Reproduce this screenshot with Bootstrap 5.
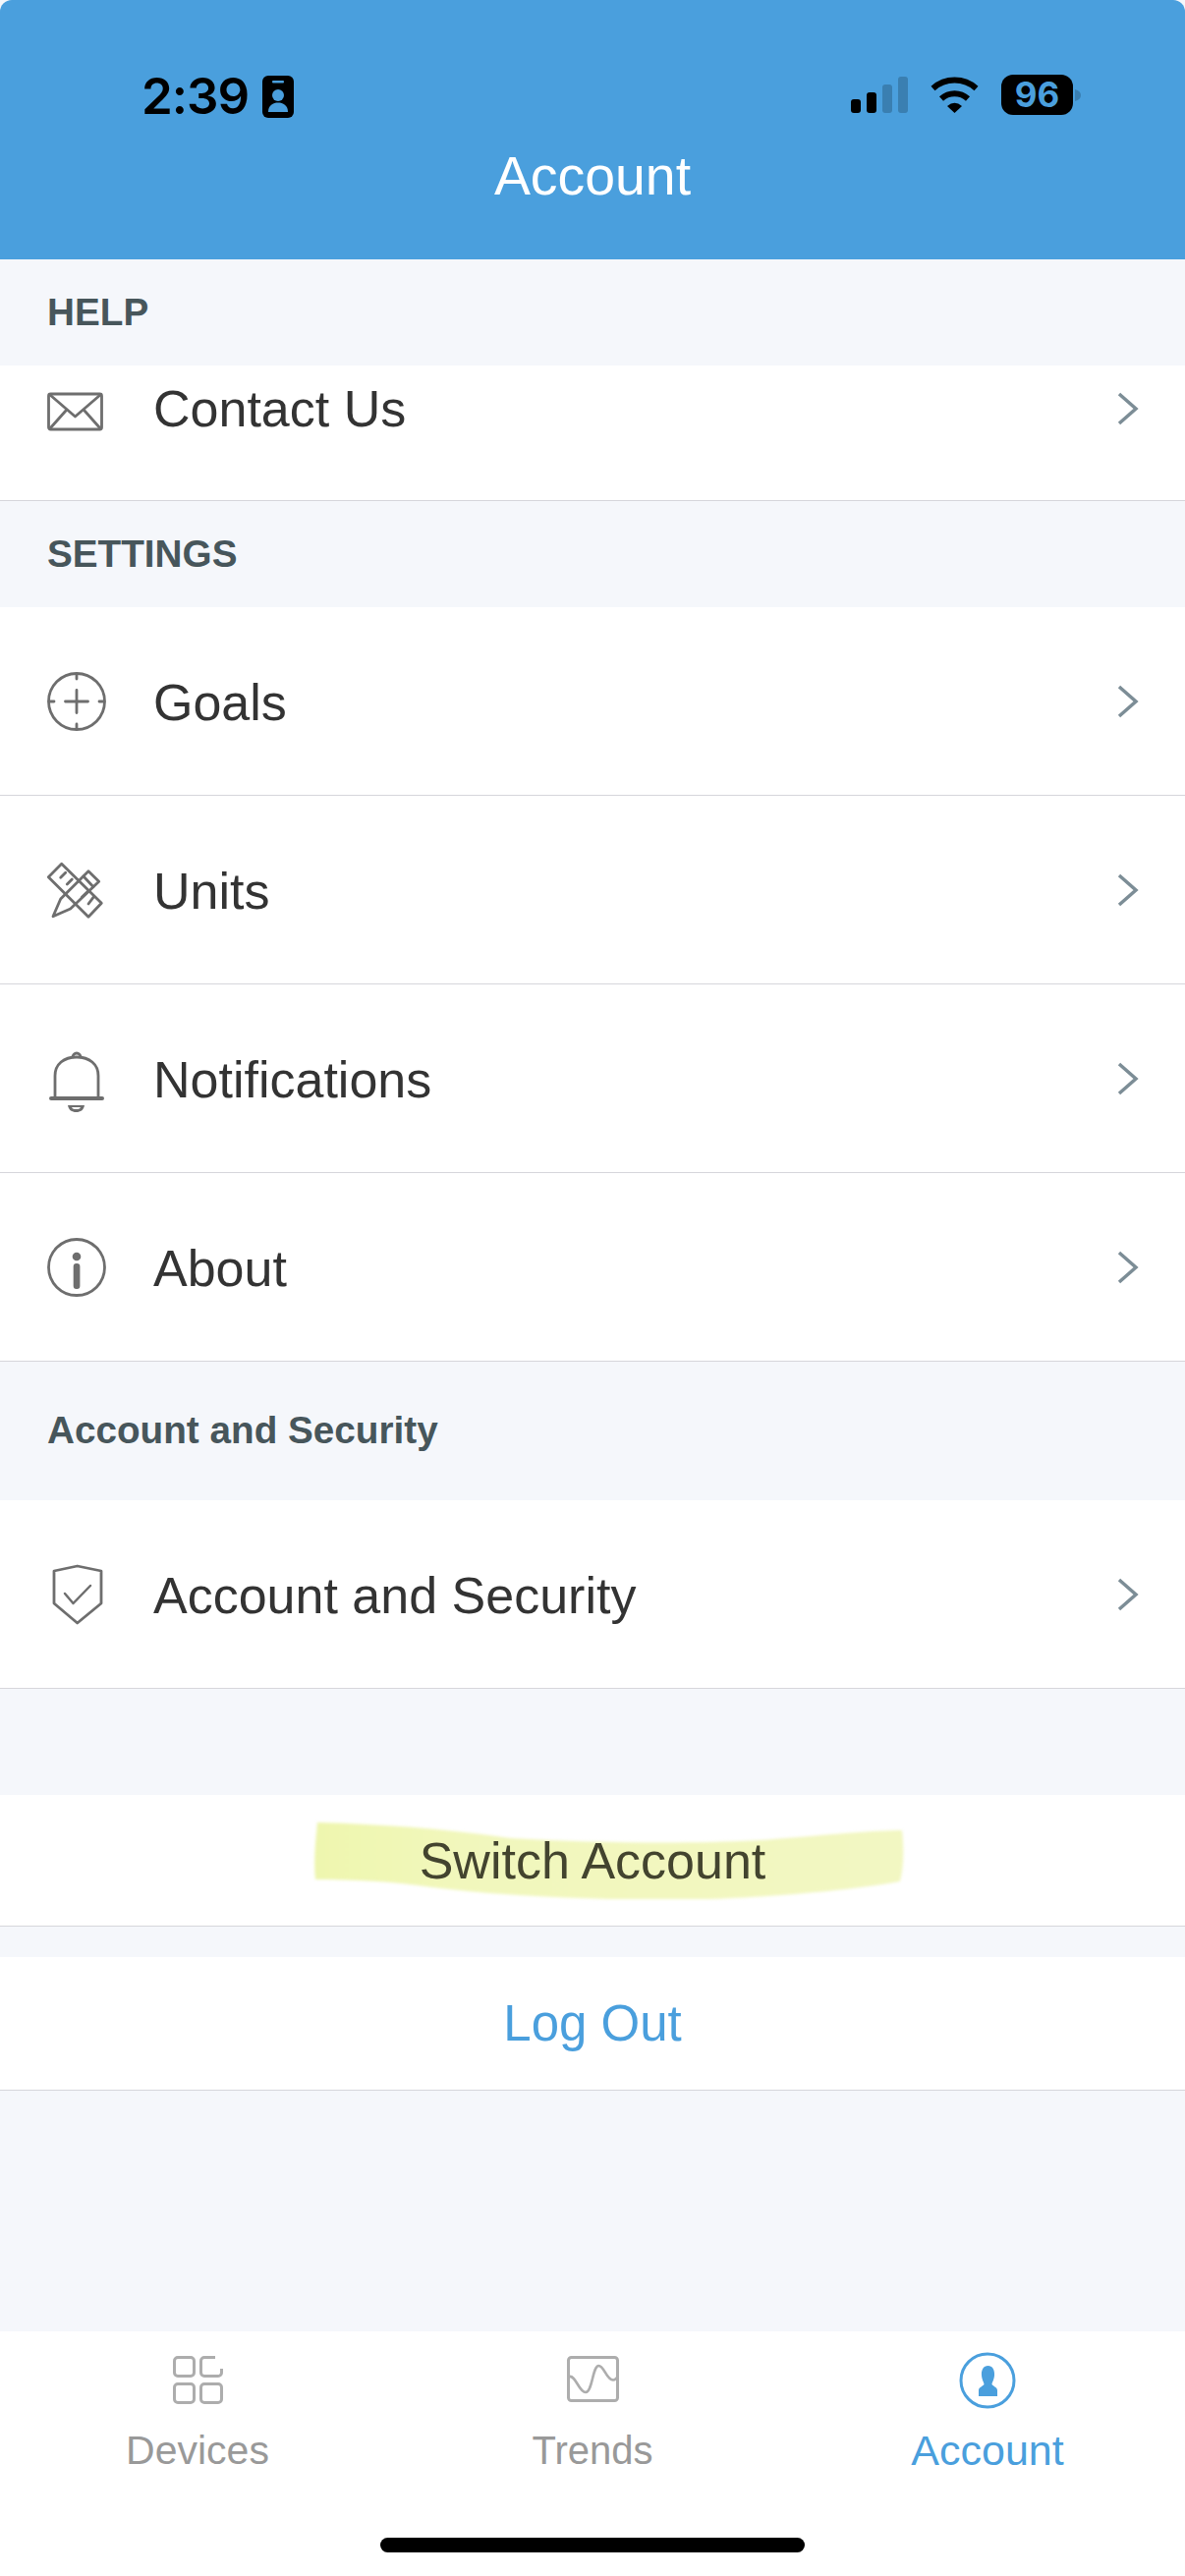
<!DOCTYPE html>
<html lang="en">
<head>
<meta charset="utf-8">
<title>Account</title>
<link href="https://cdn.jsdelivr.net/npm/bootstrap@5.3.0/dist/css/bootstrap.min.css" rel="stylesheet">
<style>
html,body{margin:0;height:2622px;overflow:hidden;background:#fff}
body{font-family:"Liberation Sans",Arial,sans-serif;color:#333}
.app-screen{height:2622px;background:#f5f7fb}
.app-head{background:#4a9fdd;height:264px;border-radius:12px 12px 0 0;flex:none}
.app-status{height:147px;padding:76px 106px 0 144px}
.app-time{font-family:Inter,"Liberation Sans",sans-serif;font-weight:600;font-size:51px;line-height:44px;color:#000;letter-spacing:-1px}
.app-gap-id{gap:14px}
.app-gap-sig{gap:22px}
.app-title{font-size:55.4px;line-height:64px;color:#fff;text-align:center;font-weight:400}
.app-batt{width:73px;height:41px;background:#000;border-radius:12px;color:#4a9fdd;font-family:Inter,"Liberation Sans",sans-serif;font-weight:700;font-size:35px;line-height:41px;text-align:center}
.app-nub{margin-left:-20px}
.app-sec{height:108px;padding:0 48px;font-weight:700;font-size:38.7px;color:#47565b;line-height:1;flex:none}
.app-sec-tall{height:141px}
.app-rows{--bs-border-color:#d6d6db;--bs-border-width:1px;--bs-list-group-border-color:#d6d6db;--bs-list-group-border-width:1px;--bs-list-group-item-padding-x:48px;--bs-list-group-item-padding-y:0;--bs-list-group-bg:#fff;--bs-list-group-color:#333;--bs-list-group-border-radius:0;flex:none}
.app-row{height:192px;font-size:52px;line-height:60px;gap:48px}
.app-row>span{padding-top:2px}
.app-row.app-clip{height:138px;padding-bottom:50px}
.app-row.app-clip>span{padding-top:0}
.app-row svg.app-ico{width:60px;height:60px;flex:none;overflow:visible}
.app-chev{width:24px;height:34px;margin-right:-2px;flex:none}
.app-gap{height:108px;flex:none}
.app-btn{height:134px;font-size:52px;line-height:60px;background:#fff;border-bottom:1px solid #d6d6db;flex:none}
.app-btn.app-switch{color:#43442f}
.app-btn.app-log{height:136px;font-size:51px;color:#4a9fdd;margin-top:31px}
.app-mark{left:320px;top:28px;width:600px;height:78px;filter:blur(1.5px)}
.app-mark-text{z-index:1}
.app-tabs{height:249px;background:#fff;flex:none;margin:0;--bs-gutter-x:0}
.app-tab{font-size:41px;line-height:48px;color:#999;padding-top:18px}
.app-tab-sm{font-size:40px}
.app-tab.app-on{color:#4a9fdd;font-size:43px}
.app-tab svg{height:62px;width:62px;display:block;margin:0 auto 17px}
.app-home{left:387px;top:210px;width:432px;height:15px;background:#000;border-radius:8px}
.app-ico-s{fill:none;stroke:#6e6e6e;stroke-width:2.800;stroke-linejoin:round;stroke-linecap:round}
</style>
</head>
<body>
<div class="app-screen d-flex flex-column">
  <header class="app-head d-flex flex-column">
    <div class="app-status d-flex justify-content-between align-items-start">
      <div class="d-flex align-items-center app-gap-id">
        <span class="app-time">2:39</span>
        <svg width="32" height="43" viewBox="0 0 32 43"><rect width="32" height="43" rx="6" fill="#000"/><rect x="10" y="5" width="12" height="2.500" rx="1" fill="#4a9fdd"/><circle cx="16" cy="20" r="6" fill="#4a9fdd"/><path d="M6 37c0-7 5-9.500 10-9.500s10 2.500 10 9.500z" fill="#4a9fdd"/></svg>
      </div>
      <div class="d-flex align-items-center app-gap-sig">
        <svg width="58" height="37" viewBox="0 0 58 37"><rect y="23" width="10" height="14" rx="3" fill="#000"/><rect x="16" y="16" width="10" height="21" rx="3" fill="#000"/><rect x="32" y="8" width="10" height="29" rx="3" fill="#3a7fb1"/><rect x="48" width="10" height="37" rx="3" fill="#3a7fb1"/></svg>
        <svg width="51" height="37" viewBox="0 0 51 37" fill="none" stroke="#000" stroke-width="6"><path d="M3.500 12A33 33 0 0 1 47.500 12"/><path d="M12 22.500A20 20 0 0 1 39 22.500"/><path d="M18 30Q25.500 23.500 33 30L25.500 37Z" fill="#000" stroke="none"/></svg>
        <div class="app-batt">96</div>
        <svg class="app-nub" width="6" height="12" viewBox="0 0 6 12"><path d="M0 0c4 1 6 3 6 6s-2 5-6 6z" fill="#3a7fb1"/></svg>
      </div>
    </div>
    <div class="app-title">Account</div>
  </header>

  <div class="app-sec d-flex align-items-center">HELP</div>
  <div class="list-group list-group-flush app-rows">
    <div class="list-group-item app-row app-clip d-flex align-items-center border-bottom">
      <svg class="app-ico" viewBox="0 0 60 60"><g class="app-ico-s"><rect x="1.500" y="15" width="54" height="36" rx="2"/><path d="M3 16 28.500 38 54 16M3 50 19 32M54 50 38 32"/></g></svg>
      <span class="flex-grow-1">Contact Us</span>
      <svg class="app-chev" viewBox="0 0 24 34" fill="none" stroke="#7c8d96" stroke-width="3.500"><path d="M3 2 20 17 3 32"/></svg>
    </div>
  </div>

  <div class="app-sec d-flex align-items-center">SETTINGS</div>
  <div class="list-group list-group-flush app-rows">
    <div class="list-group-item app-row d-flex align-items-center border-bottom">
      <svg class="app-ico" viewBox="0 0 60 60"><g class="app-ico-s"><circle cx="30" cy="30" r="28.500"/><path d="M30 18.500V41.500M18.500 30H41.500M30 2V7M30 53V58M2 30H7M53 30H58"/></g></svg>
      <span class="flex-grow-1">Goals</span>
      <svg class="app-chev" viewBox="0 0 24 34" fill="none" stroke="#7c8d96" stroke-width="3.500"><path d="M3 2 20 17 3 32"/></svg>
    </div>
    <div class="list-group-item app-row d-flex align-items-center border-bottom">
      <svg class="app-ico" viewBox="0 0 60 60"><g class="app-ico-s"><path d="M14.700 3.300 1.300 16.700 42 57.300 55.300 43.300Z"/><path d="M13.700 17.300 18.700 12.300M20.300 24 25.300 19M35.300 37.300 42 30.700M42 44 47 37.300"/><path d="M6 56.700 13.700 39 42 10.700 52.700 21.300 23.700 49Z"/><path d="M37 16 47 26.700"/></g></svg>
      <span class="flex-grow-1">Units</span>
      <svg class="app-chev" viewBox="0 0 24 34" fill="none" stroke="#7c8d96" stroke-width="3.500"><path d="M3 2 20 17 3 32"/></svg>
    </div>
    <div class="list-group-item app-row d-flex align-items-center border-bottom">
      <svg class="app-ico" viewBox="0 0 60 60"><g class="app-ico-s"><path d="M8 50V27C8 15 17 8 30 8S52 15 52 27V50"/><path d="M4 50H56" stroke-width="4"/><path d="M26 8a4 4 0 0 1 8 0"/></g><path d="M21 57H38C37 62 34 64 29.500 64S22 62 21 57Z" fill="#6e6e6e"/><path d="M25 59H34C33 61 31.500 61 29.500 61S26 61 25 59Z" fill="#fff"/></svg>
      <span class="flex-grow-1">Notifications</span>
      <svg class="app-chev" viewBox="0 0 24 34" fill="none" stroke="#7c8d96" stroke-width="3.500"><path d="M3 2 20 17 3 32"/></svg>
    </div>
    <div class="list-group-item app-row d-flex align-items-center border-bottom">
      <svg class="app-ico" viewBox="0 0 60 60"><circle class="app-ico-s" cx="30" cy="30" r="28.500"/><circle cx="30" cy="19" r="4.300" fill="#6e6e6e"/><rect x="26.700" y="26" width="6.700" height="26" rx="3" fill="#6e6e6e"/></svg>
      <span class="flex-grow-1">About</span>
      <svg class="app-chev" viewBox="0 0 24 34" fill="none" stroke="#7c8d96" stroke-width="3.500"><path d="M3 2 20 17 3 32"/></svg>
    </div>
  </div>

  <div class="app-sec app-sec-tall d-flex align-items-center">Account and Security</div>
  <div class="list-group list-group-flush app-rows">
    <div class="list-group-item app-row d-flex align-items-center border-bottom">
      <svg class="app-ico" viewBox="0 0 60 60"><g class="app-ico-s"><path d="M7 6 30.700 1 55 6V39L30.700 59 7 39Z"/><path d="M18 29 26.500 39 44 21" stroke-width="2.500"/></g></svg>
      <span class="flex-grow-1">Account and Security</span>
      <svg class="app-chev" viewBox="0 0 24 34" fill="none" stroke="#7c8d96" stroke-width="3.500"><path d="M3 2 20 17 3 32"/></svg>
    </div>
  </div>

  <div class="app-gap"></div>
  <div class="app-btn app-switch position-relative d-flex align-items-center justify-content-center">
    <svg class="app-mark position-absolute" viewBox="0 0 600 78" preserveAspectRatio="none"><defs><linearGradient id="hl" x1="0" x2="1" y1="0" y2="0"><stop offset="0" stop-color="#eef6ae"/><stop offset=".25" stop-color="#f1f7bc"/><stop offset="1" stop-color="#f2f7c2"/></linearGradient></defs><path d="M3 0C70 2 130 6 200 16C300 22 420 22 480 16C530 12 570 8 598 8C600 25 600 45 596 60C540 70 460 76 400 78C300 80 200 76 120 66C80 60 40 58 1 58C-1 40 1 20 3 0Z" fill="url(#hl)"/></svg>
    <span class="app-mark-text position-relative">Switch Account</span>
  </div>
  <div class="app-btn app-log d-flex align-items-center justify-content-center">Log Out</div>
  <div class="flex-grow-1"></div>

  <nav class="app-tabs row position-relative">
    <div class="col-4 app-tab text-center">
      <svg viewBox="0 0 62 62" fill="none" stroke="#adadad" stroke-width="3"><rect x="7.500" y="8.500" width="20" height="19" rx="3.500"/><path d="M49 8.500H38a3.500 3.500 0 0 0-3.500 3.500V24a3.500 3.500 0 0 0 3.500 3.500H52a3.500 3.500 0 0 0 3.500-3.500V20"/><rect x="7.500" y="35.500" width="20" height="19" rx="3.500"/><rect x="34.500" y="35.500" width="21" height="19" rx="3.500"/></svg>
      Devices
    </div>
    <div class="col-4 app-tab app-tab-sm text-center">
      <svg viewBox="0 0 62 62" fill="none" stroke="#adadad" stroke-width="3"><rect x="6.500" y="8.500" width="50" height="44" rx="3"/><path d="M7 28C14 26 17 44 24 44C31 44 31 17 37.300 17C43 17 45 31.500 52 31.500C54 31.500 56 29 57 27" stroke-width="2.600"/></svg>
      Trends
    </div>
    <div class="col-4 app-tab app-on text-center">
      <svg viewBox="0 0 62 62" fill="none" stroke="#4a9fdd" stroke-width="3"><circle cx="31" cy="32" r="27"/><path d="M31.500 17C36 17 38.500 21 38 27C37.500 32 35.500 34 35.500 36C37 38 41 39 41 42V48H22V42C22 39 26 38 27.500 36C27.500 34 25.500 32 25 27C24.500 21 27 17 31.500 17Z" fill="#4a9fdd" stroke="none"/></svg>
      Account
    </div>
    <div class="app-home position-absolute"></div>
  </nav>
</div>
</body>
</html>
